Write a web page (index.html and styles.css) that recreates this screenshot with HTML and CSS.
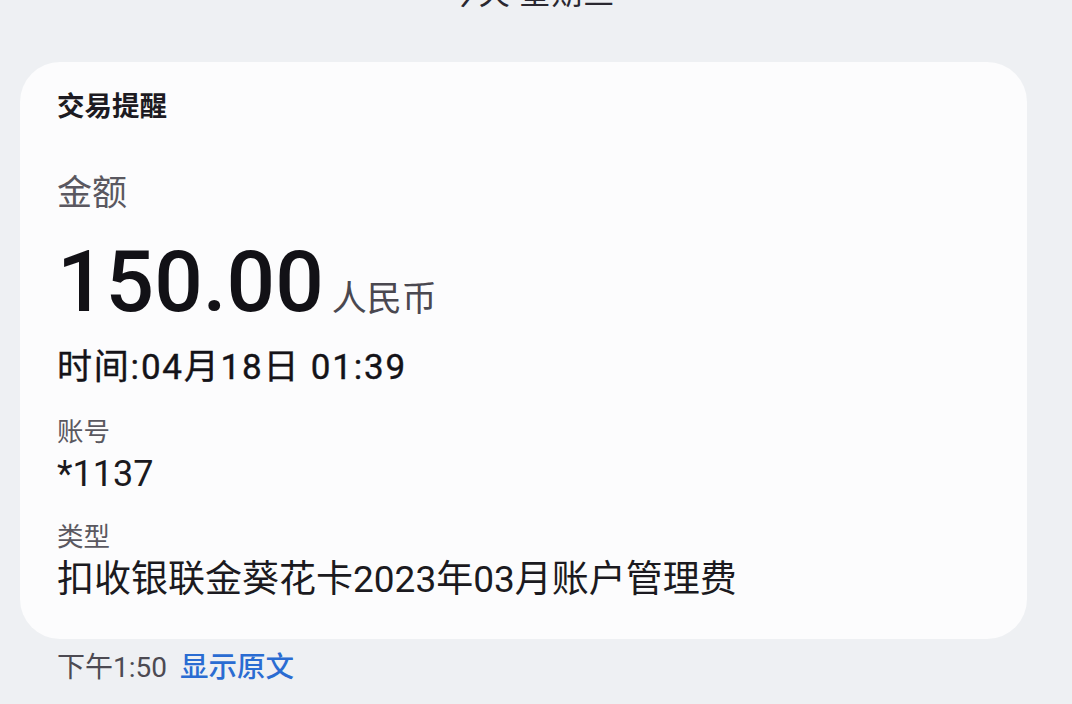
FILE: index.html
```html
<!DOCTYPE html>
<html lang="zh-CN">
<head>
<meta charset="utf-8">
<link rel="stylesheet" href="styles.css">
</head>
<body>
<div class="date">今天 星期三</div>
<div class="card">
  <div class="title">交易提醒</div>
  <div class="label label-amount">金额</div>
  <div class="amount"><span class="num">150.00</span><span class="cur">人民币</span></div>
  <div class="time">时间:04月18日 01:39</div>
  <div class="label label-acct">账号</div>
  <div class="value">*1137</div>
  <div class="label label-type">类型</div>
  <div class="value value-type">扣收银联金葵花卡2023年03月账户管理费</div>
</div>
<div class="footer"><span class="ftime">下午1:50</span><span class="link">显示原文</span></div>
</body>
</html>
```
FILE: styles.css
```css
html, body {
  margin: 0;
  padding: 0;
}
body {
  width: 1072px;
  height: 704px;
  overflow: hidden;
  background: #eef0f3;
  font-family: Roboto, "Noto Sans CJK SC", sans-serif;
  color: #1b1a20;
  display: flex;
  flex-direction: column;
}
.date {
  margin-top: -26px;
  height: 40px;
  line-height: 40px;
  text-align: center;
  font-size: 31px;
  color: #2a2830;
  padding-right: 10px;
  letter-spacing: 1px;
}
.card {
  margin: 48px 45px 0 20px;
  background: #fcfcfd;
  border-radius: 40px;
  padding: 25px 37px 35px 37px;
  display: flex;
  flex-direction: column;
}
.title {
  font-size: 27.5px;
  line-height: 40px;
  font-weight: 700;
  color: #1d1b22;
}
.label {
  color: #5a5860;
  font-size: 26.5px;
  line-height: 36px;
}
.label-amount {
  font-size: 35px;
  line-height: 44px;
  margin-top: 45px;
}
.amount {
  margin-top: 16px;
  line-height: 100px;
  height: 100px;
  white-space: nowrap;
}
.num {
  font-size: 85.5px;
  font-weight: 500;
  color: #121116;
}
.cur {
  font-size: 35px;
  color: #4a4850;
  margin-left: 8px;
}
.time {
  margin-top: 14px;
  font-size: 35px;
  line-height: 44px;
  letter-spacing: 1.8px;
  color: #141318;
  -webkit-text-stroke: 0.4px #141318;
}
.label-acct {
  margin-top: 24px;
}
.value {
  margin-top: 2px;
  font-size: 36px;
  line-height: 44px;
}
.label-type {
  margin-top: 23px;
}
.value-type {
  font-size: 37px;
  line-height: 48px;
  margin-top: 1px;
}
.footer {
  margin: 9px 0 0 57px;
  line-height: 40px;
  font-size: 28px;
  display: flex;
  gap: 13px;
}
.ftime {
  color: #4c4a52;
}
.link {
  color: #2a6cd2;
  font-weight: 500;
  font-size: 28.5px;
}
```
